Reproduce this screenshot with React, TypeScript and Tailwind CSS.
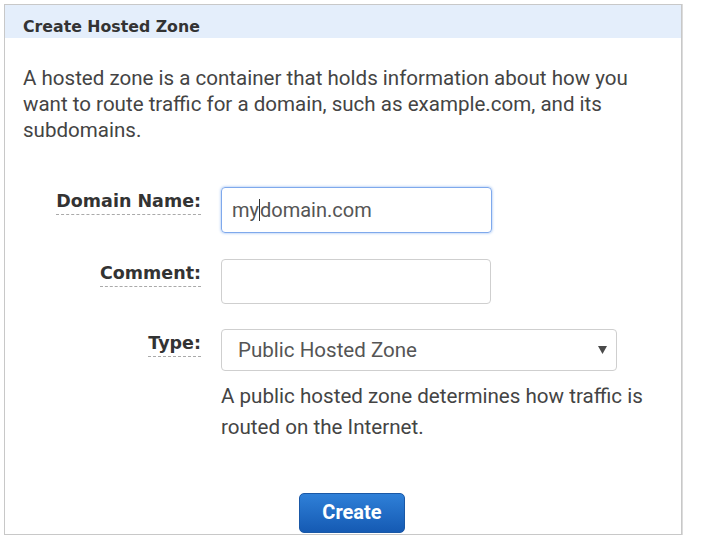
export default function App() {
  return (
    <div className="w-[709px] h-[549px] bg-white pt-[4px] pl-[4px]" style={{ fontFamily: "Roboto, 'Liberation Sans', sans-serif" }}>
      <div className="w-[678px] h-[531px] border border-[#c8c8c8] shadow-[1px_0_0_#dcdcdc] flex flex-col">
        <div className="h-[33px] bg-[#e4eefb] pl-[18px] pb-[3px] flex items-end">
          <h2 className="text-[15.75px] leading-[16px] font-bold text-[#333]" style={{ fontFamily: "'DejaVu Sans', Verdana, sans-serif" }}>
            Create Hosted Zone
          </h2>
        </div>
        <div className="flex-1 flex flex-col pt-[27px]">
          <p className="px-[18px] text-[20.55px] leading-[26px] text-[#444]">
            A hosted zone is a container that holds information about how you want to route traffic for a domain, such as example.com, and its subdomains.
          </p>

          <div className="mt-[44px] flex flex-col gap-[26px]">
            <div className="flex items-start">
              <div className="w-[196px] flex justify-end pt-[1px]">
                <Label text="Domain Name:" />
              </div>
              <div className="ml-[20px] w-[271px] h-[46px] rounded-[4px] border border-[#7fa9ec] shadow-[0_0_3px_#8fb6f0] flex items-center pl-[10px] text-[20px] text-[#555]">
                <span>my</span>
                <span className="w-px h-[22px] bg-[#333]"></span>
                <span>domain.com</span>
              </div>
            </div>

            <div className="flex items-start">
              <div className="w-[196px] flex justify-end pt-[1px]">
                <Label text="Comment:" />
              </div>
              <div className="ml-[20px] w-[270px] h-[45px] rounded-[4px] border border-[#cfcfcf]"></div>
            </div>
          </div>

          <div className="mt-[25px] flex items-start">
            <div className="w-[196px] flex justify-end pt-[1px]">
              <Label text="Type:" />
            </div>
            <div className="ml-[20px] flex flex-col">
              <div className="w-[396px] h-[42px] rounded-[4px] border border-[#cfcfcf] flex items-center justify-between pl-[16px] pr-[9px] text-[20.55px] text-[#555]">
                <span>Public Hosted Zone</span>
                <svg width="9" height="8" viewBox="0 0 9 8">
                  <path d="M0 0 L9 0 L4.5 8 Z" fill="#4a4a4a" />
                </svg>
              </div>
              <p className="mt-[10px] w-[440px] text-[20.6px] leading-[31px] text-[#444]">
                A public hosted zone determines how traffic is routed on the Internet.
              </p>
            </div>
          </div>

          <div className="mt-auto mb-[1px] ml-[294px]">
            <button className="w-[106px] h-[40px] pb-[3px] rounded-[5px] border border-[#1a58a6] bg-gradient-to-b from-[#2f80d8] to-[#155ab3] text-white text-[20px] font-bold">
              Create
            </button>
          </div>
        </div>
      </div>
    </div>
  );
}

function Label({ text }: { text: string }) {
  return (
    <span
      className="text-[17.5px] font-bold text-[#333] border-b border-dashed border-[#aaa]"
      style={{ fontFamily: "'DejaVu Sans', Verdana, sans-serif" }}
    >
      {text}
    </span>
  );
}
